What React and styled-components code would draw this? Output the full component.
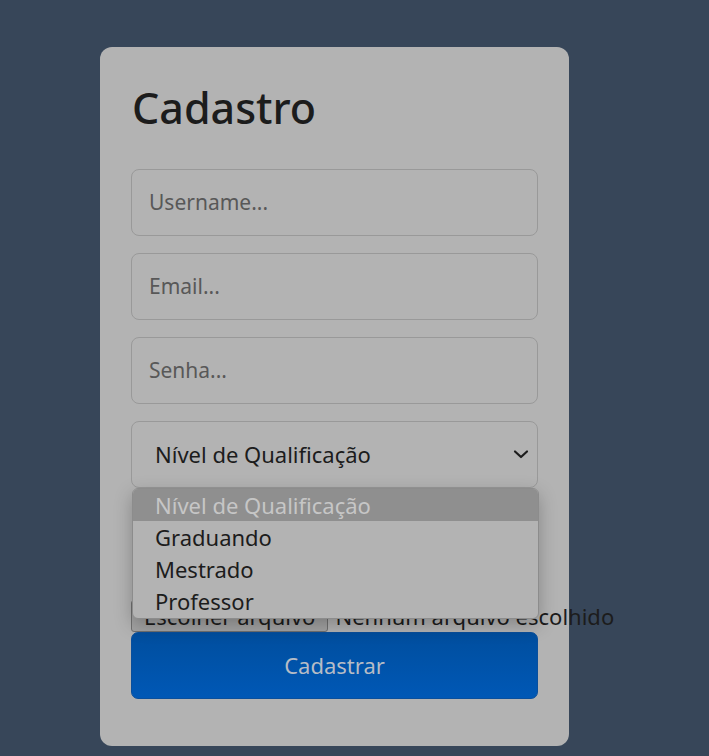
import React from "react";
import styled, { createGlobalStyle } from "styled-components";

const GlobalStyle = createGlobalStyle`
  html, body {
    margin: 0;
    padding: 0;
    background-color: #374659;
    font-family: "Noto Sans", "Open Sans", sans-serif;
    overflow: hidden;
  }
`;

const Page = styled.div`
  width: 709px;
  height: 756px;
  padding-top: 47px;
  padding-left: 100px;
  box-sizing: border-box;
`;

const Card = styled.div`
  width: 469px;
  height: 699px;
  box-sizing: border-box;
  background-color: #b3b3b3;
  border-radius: 12px;
  padding: 35px 31px 0 31px;
  display: flex;
  flex-direction: column;
`;

const Title = styled.h1`
  margin: 0 0 35px 1px;
  font-size: 43px;
  font-weight: 500;
  line-height: 1.2;
  color: #1c1c1c;
`;

const Form = styled.div`
  display: flex;
  flex-direction: column;
  gap: 17px;
`;

const Input = styled.input`
  width: 407px;
  height: 67px;
  box-sizing: border-box;
  background: transparent;
  border: 1px solid #999999;
  border-radius: 8px;
  padding: 0 17px;
  font-family: inherit;
  font-size: 21px;
  color: #222;
  outline: none;

  &::placeholder {
    color: #585858;
  }
`;

const SelectWrap = styled.div`
  position: relative;
  width: 407px;
`;

const SelectBox = styled.div`
  height: 67px;
  box-sizing: border-box;
  border: 1px solid #999999;
  border-radius: 8px;
  padding: 0 8px 0 23px;
  display: flex;
  align-items: center;
  justify-content: space-between;
  font-size: 22px;
  color: #1c1c1c;
`;

const Menu = styled.ul`
  position: absolute;
  top: 67px;
  left: 1px;
  width: 405px;
  margin: 0;
  padding: 0 0 1px 0;
  list-style: none;
  background-color: #b3b3b3;
  border: 1px solid #8c8c8c;
  border-radius: 6px;
  box-shadow: 0 6px 18px rgba(0, 0, 0, 0.25);
  overflow: hidden;
  z-index: 2;
`;

const Option = styled.li`
  height: 32px;
  line-height: 32px;
  padding-left: 22px;
  font-size: 22px;
  color: ${props => (props.disabled ? "#c6c6c6" : "#1c1c1c")};
  background-color: ${props => (props.active ? "#8f8f8f" : "transparent")};
`;

const FileRow = styled.div`
  margin-top: 112px;
  height: 32px;
  display: flex;
  align-items: center;
  white-space: nowrap;
  font-size: 22px;
  color: #1c1c1c;
`;

const FileButton = styled.div`
  height: 32px;
  box-sizing: border-box;
  padding: 0 12px;
  display: flex;
  align-items: center;
  background-color: #a3a3a3;
  border: 1px solid #707070;
  border-radius: 3px;
  margin-right: 7px;
`;

const SubmitButton = styled.button`
  width: 407px;
  height: 67px;
  border: 1px solid #0a4f9c;
  border-radius: 7px;
  background: linear-gradient(180deg, #004e9e 0%, #0058b6 100%);
  color: #b6bcc6;
  font-family: inherit;
  font-size: 22px;
`;

const Chevron = () => (
  <svg width="16" height="10" viewBox="0 0 16 10">
    <path d="M2 2.5 L8 8 L14 2.5" fill="none" stroke="#1c1c1c" strokeWidth="2.2" strokeLinecap="round" strokeLinejoin="round" />
  </svg>
);

const options = ["Graduando", "Mestrado", "Professor"];

export default function App() {
  return (
    <Page>
      <GlobalStyle />
      <Card>
        <Title>Cadastro</Title>
        <Form>
          <Input placeholder="Username..." />
          <Input placeholder="Email..." />
          <Input type="password" placeholder="Senha..." />
          <SelectWrap>
            <SelectBox>
              <span>Nível de Qualificação</span>
              <Chevron />
            </SelectBox>
            <Menu>
              <Option active disabled>Nível de Qualificação</Option>
              {options.map(o => (
                <Option key={o}>{o}</Option>
              ))}
            </Menu>
          </SelectWrap>
        </Form>
        <FileRow>
          <FileButton>Escolher arquivo</FileButton>
          Nenhum arquivo escolhido
        </FileRow>
        <SubmitButton>Cadastrar</SubmitButton>
      </Card>
    </Page>
  );
}
